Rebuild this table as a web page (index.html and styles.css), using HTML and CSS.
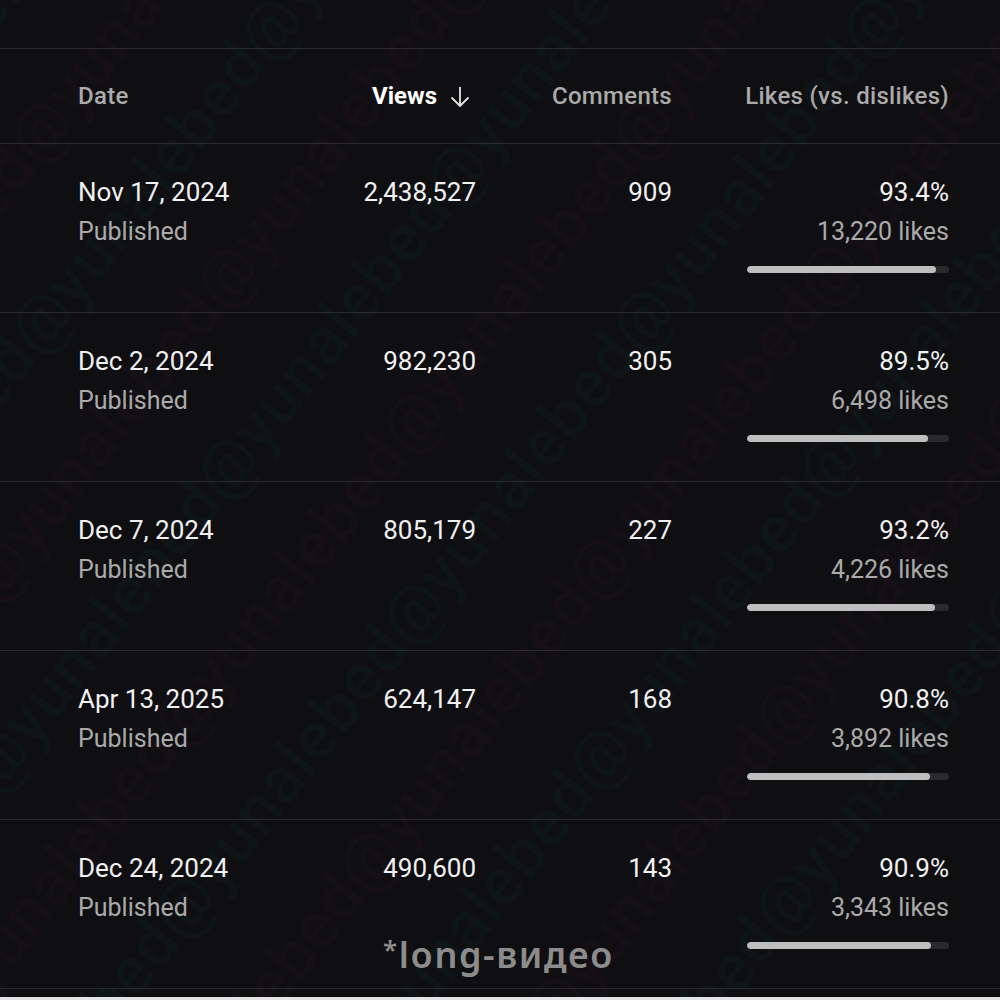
FILE: index.html
```html
<!DOCTYPE html>
<html lang="en">
<head>
<meta charset="utf-8">
<title>Video analytics</title>
<link rel="stylesheet" href="styles.css">
</head>
<body>
<div class="page">
  <div class="watermark" aria-hidden="true">
    <div class="wm-inner">
      <div class="wm-line p">@yunalebed@yunalebed@yunalebed@yunalebed@yunalebed@yunalebed@yunalebed</div>
      <div class="wm-line t">@yunalebed@yunalebed@yunalebed@yunalebed@yunalebed@yunalebed@yunalebed</div>
      <div class="wm-line p">@yunalebed@yunalebed@yunalebed@yunalebed@yunalebed@yunalebed@yunalebed</div>
      <div class="wm-line t">@yunalebed@yunalebed@yunalebed@yunalebed@yunalebed@yunalebed@yunalebed</div>
      <div class="wm-line p">@yunalebed@yunalebed@yunalebed@yunalebed@yunalebed@yunalebed@yunalebed</div>
      <div class="wm-line t">@yunalebed@yunalebed@yunalebed@yunalebed@yunalebed@yunalebed@yunalebed</div>
      <div class="wm-line p">@yunalebed@yunalebed@yunalebed@yunalebed@yunalebed@yunalebed@yunalebed</div>
      <div class="wm-line t">@yunalebed@yunalebed@yunalebed@yunalebed@yunalebed@yunalebed@yunalebed</div>
      <div class="wm-line p">@yunalebed@yunalebed@yunalebed@yunalebed@yunalebed@yunalebed@yunalebed</div>
      <div class="wm-line t">@yunalebed@yunalebed@yunalebed@yunalebed@yunalebed@yunalebed@yunalebed</div>
      <div class="wm-line p">@yunalebed@yunalebed@yunalebed@yunalebed@yunalebed@yunalebed@yunalebed</div>
      <div class="wm-line t">@yunalebed@yunalebed@yunalebed@yunalebed@yunalebed@yunalebed@yunalebed</div>
      <div class="wm-line p">@yunalebed@yunalebed@yunalebed@yunalebed@yunalebed@yunalebed@yunalebed</div>
      <div class="wm-line t">@yunalebed@yunalebed@yunalebed@yunalebed@yunalebed@yunalebed@yunalebed</div>
    </div>
  </div>

  <div class="table">
    <div class="row head">
      <div class="cell c-date">Date</div>
      <div class="cell c-num sorted">Views
        <svg class="arrow" width="22" height="24" viewBox="0 0 22 24"><path d="M11 2 V21 M2.5 12.5 L11 21 L19.5 12.5" fill="none" stroke="#e6e6e6" stroke-width="1.8"/></svg>
      </div>
      <div class="cell c-num">Comments</div>
      <div class="cell c-num">Likes (vs. dislikes)</div>
    </div>

    <div class="row">
      <div class="cell c-date"><div class="main">Nov 17, 2024</div><div class="sub">Published</div></div>
      <div class="cell c-num"><div class="main">2,438,527</div></div>
      <div class="cell c-num"><div class="main">909</div></div>
      <div class="cell c-num likes"><div class="main">93.4%</div><div class="sub">13,220 likes</div><div class="bar"><div class="fill" style="width:93.4%"></div></div></div>
    </div>

    <div class="row">
      <div class="cell c-date"><div class="main">Dec 2, 2024</div><div class="sub">Published</div></div>
      <div class="cell c-num"><div class="main">982,230</div></div>
      <div class="cell c-num"><div class="main">305</div></div>
      <div class="cell c-num likes"><div class="main">89.5%</div><div class="sub">6,498 likes</div><div class="bar"><div class="fill" style="width:89.5%"></div></div></div>
    </div>

    <div class="row">
      <div class="cell c-date"><div class="main">Dec 7, 2024</div><div class="sub">Published</div></div>
      <div class="cell c-num"><div class="main">805,179</div></div>
      <div class="cell c-num"><div class="main">227</div></div>
      <div class="cell c-num likes"><div class="main">93.2%</div><div class="sub">4,226 likes</div><div class="bar"><div class="fill" style="width:93.2%"></div></div></div>
    </div>

    <div class="row">
      <div class="cell c-date"><div class="main">Apr 13, 2025</div><div class="sub">Published</div></div>
      <div class="cell c-num"><div class="main">624,147</div></div>
      <div class="cell c-num"><div class="main">168</div></div>
      <div class="cell c-num likes"><div class="main">90.8%</div><div class="sub">3,892 likes</div><div class="bar"><div class="fill" style="width:90.8%"></div></div></div>
    </div>

    <div class="row">
      <div class="cell c-date"><div class="main">Dec 24, 2024</div><div class="sub">Published</div></div>
      <div class="cell c-num"><div class="main">490,600</div></div>
      <div class="cell c-num"><div class="main">143</div></div>
      <div class="cell c-num likes"><div class="main">90.9%</div><div class="sub">3,343 likes</div><div class="bar"><div class="fill" style="width:90.9%"></div></div></div>
    </div>
  </div>

  <div class="caption"><span class="ast">*</span>long-видео</div>
  <div class="bottom-strip"></div>
</div>
</body>
</html>
```
FILE: styles.css
```css
* { box-sizing: border-box; }
html, body {
  margin: 0;
  padding: 0;
  background: #0f0e11;
}
body {
  font-family: Roboto, "Liberation Sans", sans-serif;
  color: #f1f1f1;
}
.page {
  position: relative;
  width: 1000px;
  height: 1000px;
  overflow: hidden;
  padding-top: 48px;
  display: flex;
  flex-direction: column;
}
.watermark {
  position: absolute;
  inset: 0;
  overflow: hidden;
  pointer-events: none;
  z-index: 0;
}
.wm-inner {
  position: absolute;
  left: -600px;
  top: -700px;
  width: 2400px;
  transform: rotate(-52deg);
  transform-origin: 1200px 1200px;
}
.wm-line {
  font-family: Roboto, sans-serif;
  font-weight: 500;
  font-size: 66px;
  line-height: 118px;
  white-space: nowrap;
  letter-spacing: 1px;
}
.wm-line.p { color: rgba(120, 40, 100, 0.07); }
.wm-line.t { color: rgba(30, 120, 105, 0.07); margin-left: -150px; }

.table {
  position: relative;
  z-index: 1;
  border-top: 1px solid #2b2b2d;
}
.row {
  display: grid;
  grid-template-columns: 200px 198px 196px 277px;
  padding-left: 78px;
  padding-right: 51px;
  height: 169px;
  border-bottom: 1px solid #2b2b2d;
  padding-top: 29px;
  font-size: 26px;
  line-height: 39px;
}
.row.head {
  height: 95px;
  padding-top: 0;
  align-items: center;
  font-size: 24px;
  letter-spacing: 0.3px;
  color: #aaaaaa;
  font-weight: 500;
}
.cell.c-num { text-align: right; }
.head .sorted {
  color: #ffffff;
  font-weight: 700;
  letter-spacing: 0;
  display: flex;
  justify-content: flex-end;
  align-items: center;
  gap: 12px;
  padding-right: 5px;
}
.arrow { display: block; margin-top: 2px; }
.main { color: #f1f1f1; }
.sub { color: #aaaaaa; font-size: 25px; }
.likes {
  display: flex;
  flex-direction: column;
  align-items: flex-end;
}
.bar {
  margin-top: 15px;
  width: 202px;
  height: 7px;
  border-radius: 4px;
  background: #2a2a2c;
  overflow: hidden;
}
.fill {
  height: 100%;
  border-radius: 4px;
  background: #bebebe;
}
.caption {
  position: absolute;
  z-index: 2;
  left: 383px;
  top: 925px;
  font-family: "Noto Sans", "Open Sans", sans-serif;
  font-weight: 600;
  font-size: 36px;
  line-height: 48px;
  letter-spacing: 1.6px;
  color: #8c8c8c;
}
.caption .ast {
  font-size: 26px;
  vertical-align: 9px;
}
.bottom-strip {
  position: relative;
  z-index: 1;
  margin-top: auto;
  height: 3px;
  background: #e4e4e4;
}
```
